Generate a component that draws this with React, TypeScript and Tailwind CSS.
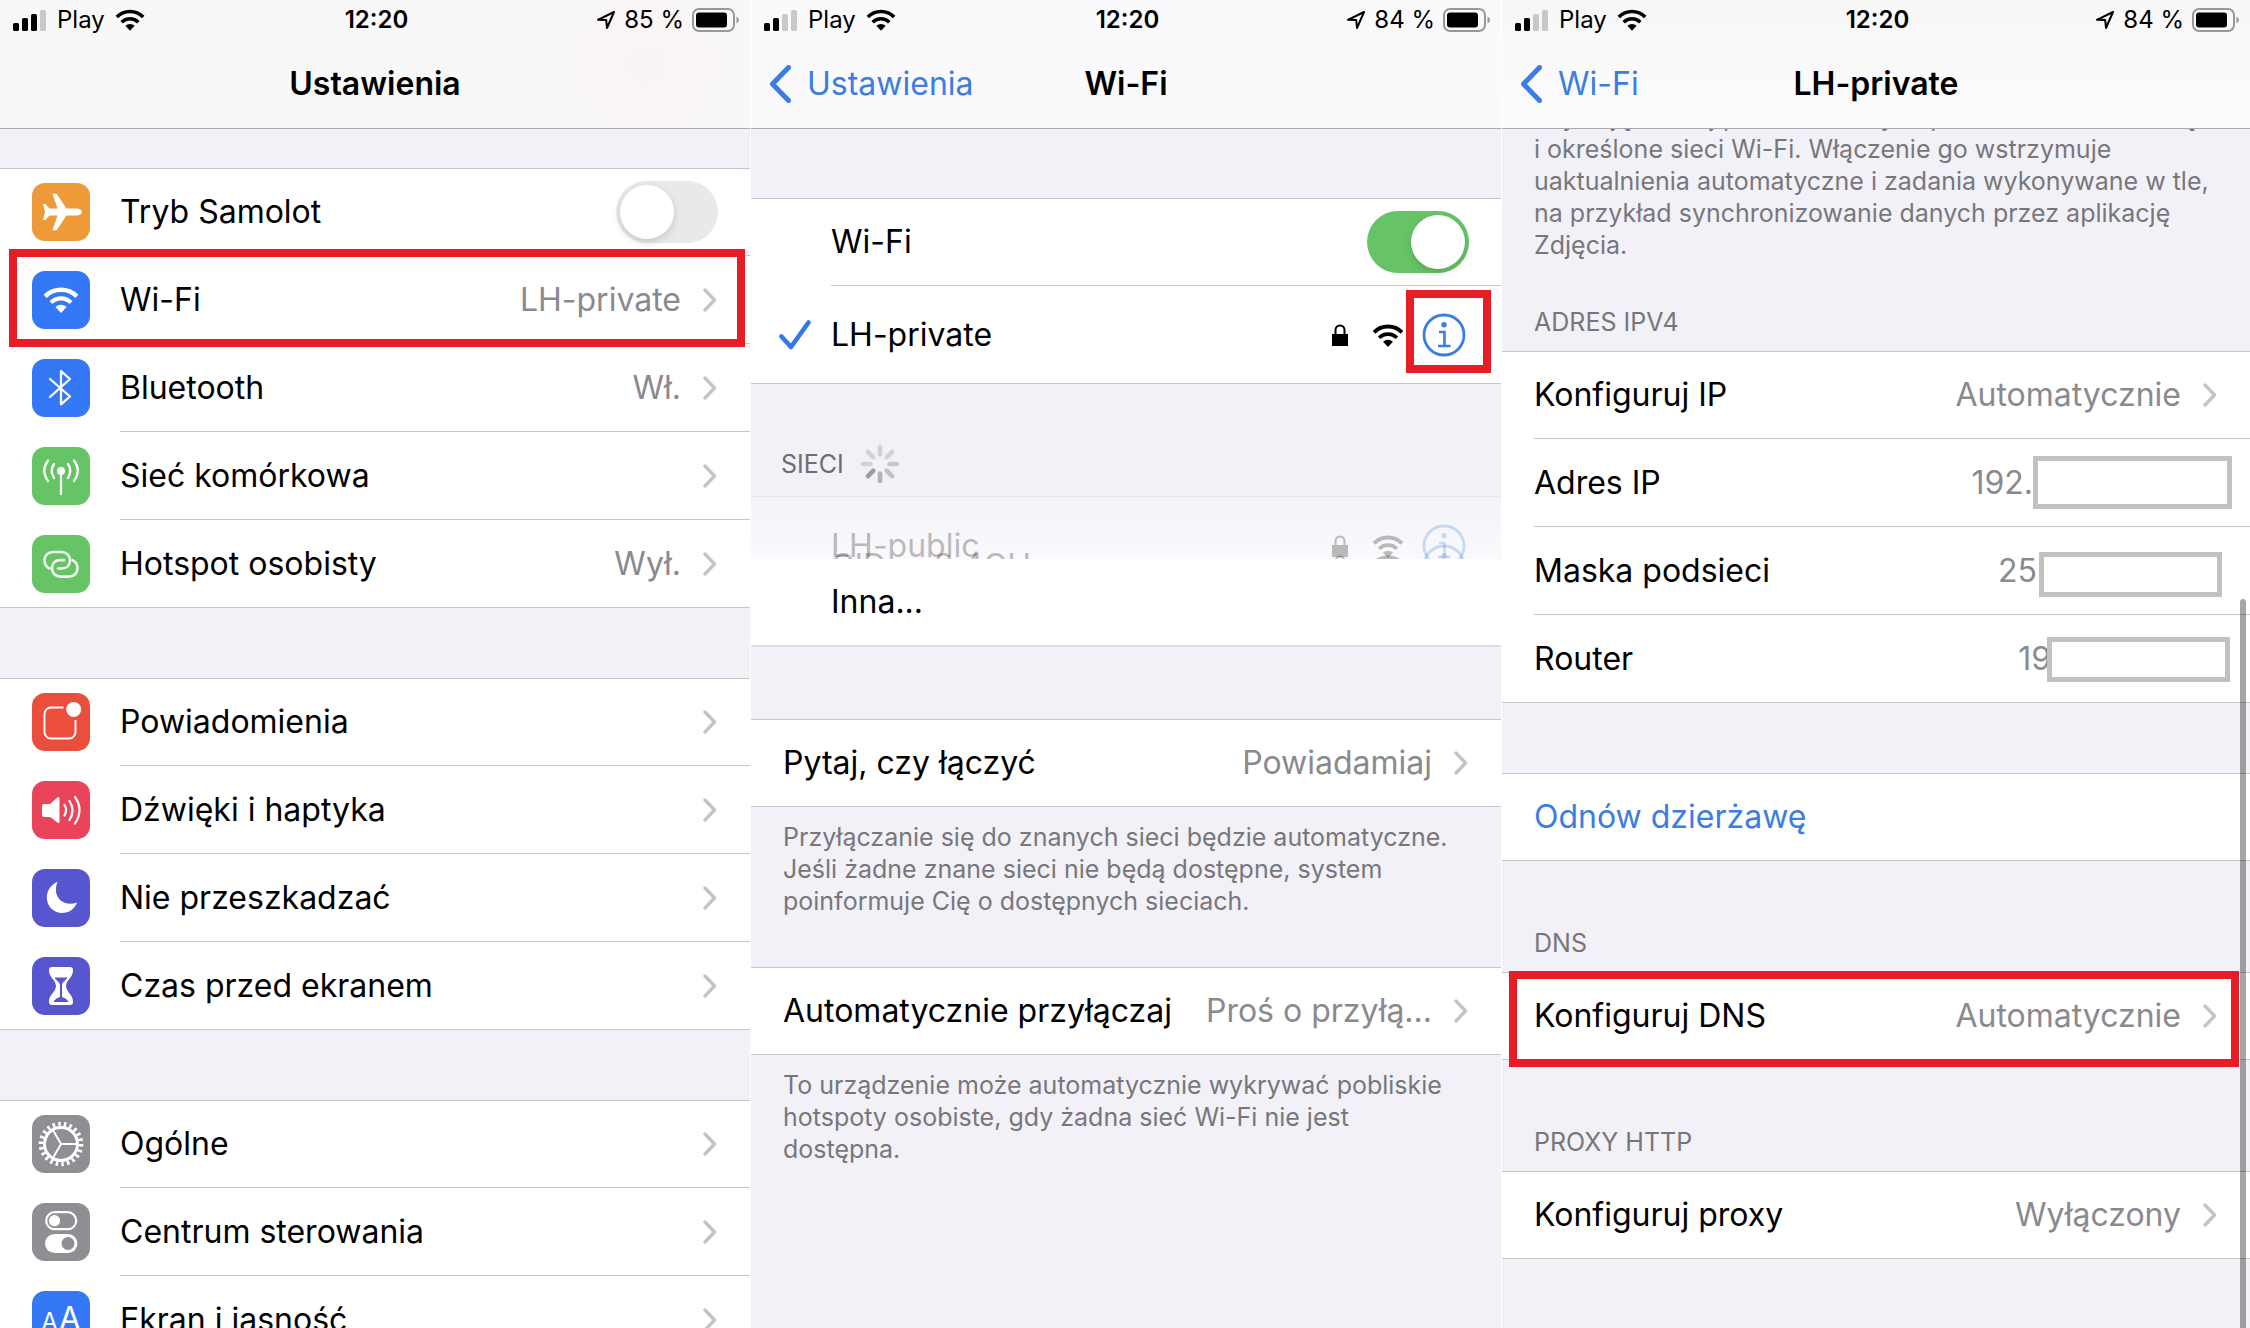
import React from 'react';

type IconProps = { className?: string };

/* ---------- Glyphs ---------- */

const WifiGlyph = ({ className }: IconProps) => (
  <svg viewBox="0 0 36 26" fill="none" className={className} aria-hidden="true">
    <path d="M2.2 9.4a22.2 22.2 0 0 1 31.6 0" stroke="currentColor" strokeWidth="4.4" />
    <path d="M8 15.6a14 14 0 0 1 20 0" stroke="currentColor" strokeWidth="4.2" />
    <path d="M18 26l-5.6-6a8 8 0 0 1 11.2 0z" fill="currentColor" />
  </svg>
);

const ChevronRight = () => (
  <svg viewBox="0 0 14 24" fill="none" className="w-[14px] h-6 shrink-0 text-[#c4c4c7]" aria-hidden="true">
    <path d="M2 2l9.5 10L2 22" stroke="currentColor" strokeWidth="3.4" strokeLinecap="round" strokeLinejoin="round" />
  </svg>
);

const ChevronLeft = () => (
  <svg viewBox="0 0 22 38" fill="none" className="w-[22px] h-[38px]" aria-hidden="true">
    <path d="M19.5 2.5L3.5 19l16 16.5" stroke="currentColor" strokeWidth="5" strokeLinecap="round" strokeLinejoin="round" />
  </svg>
);

const LockGlyph = () => (
  <svg viewBox="0 0 16 22" fill="none" className="w-4 h-[22px]" aria-hidden="true">
    <path d="M3.5 11V6a4.5 4.5 0 0 1 9 0v5" stroke="currentColor" strokeWidth="2" />
    <path d="M0 10h16v12H0z" fill="currentColor" />
  </svg>
);

const InfoGlyph = () => (
  <svg viewBox="0 0 44 44" fill="none" className="block w-11 h-11" aria-hidden="true">
    <circle cx="22" cy="22" r="20" stroke="currentColor" strokeWidth="2.8" />
    <circle cx="22" cy="11.8" r="2.7" fill="currentColor" />
    <path d="M17 19h5.5v14M16 33h12.5" stroke="currentColor" strokeWidth="2.6" />
  </svg>
);

const CheckGlyph = () => (
  <svg viewBox="0 0 32 30" fill="none" className="w-8 h-[30px]" aria-hidden="true">
    <path d="M2.5 16.5L12 27 29.5 2.5" stroke="currentColor" strokeWidth="4.6" strokeLinecap="round" strokeLinejoin="round" />
  </svg>
);

const Spinner = () => (
  <svg viewBox="0 0 40 40" className="w-10 h-10" stroke="#8e8e93" strokeWidth="4.6" strokeLinecap="round" aria-hidden="true">
    {[0.3, 0.3, 0.42, 0.5, 0.62, 0.85, 0.3, 0.3].map((opacity, i) => (
      <path key={i} d="M20 10.5V3" opacity={opacity} transform={`rotate(${i * 45} 20 20)`} />
    ))}
  </svg>
);

/* ---------- App tiles, drawn on a 58px square ---------- */

const Tile = ({ className, children }: { className: string; children: React.ReactNode }) => (
  <svg viewBox="0 0 58 58" fill="none" className={`w-[58px] h-[58px] rounded-[13px] ${className}`} aria-hidden="true">
    {children}
  </svg>
);

const PlaneTile = () => (
  <Tile className="bg-[#ef9a38]">
    <path
      d="M50 29c0-2-3-3.5-6-3.5h-9.5L25.5 12q-.8-1.3-2.3-1.3h-2.7l5 14.8h-8l-4-4.5H11l2 8-2 8h2.5l4-4.5h8l-5 14.8h2.7q1.5 0 2.3-1.3l9-13.5H44c3 0 6-1.5 6-3.5z"
      fill="#fff"
    />
  </Tile>
);

const WifiTile = () => (
  <span className="flex w-[58px] h-[58px] items-center justify-center rounded-[13px] bg-[#3478f6] text-white">
    <WifiGlyph className="w-9 h-[26px]" />
  </span>
);

const BluetoothTile = () => (
  <Tile className="bg-[#3478f6]">
    <path d="M18 20l20 17.5-9 7.8V12.2l9 7.8-20 18" stroke="#fff" strokeWidth="2.3" strokeLinejoin="round" strokeLinecap="round" />
  </Tile>
);

const CellularTile = () => (
  <Tile className="bg-[#67c466]">
    <circle cx="29" cy="24" r="4" fill="#fff" />
    <path
      d="M29 24v23M22 17q-4.5 6.5 0 14M36 17q4.5 6.5 0 14M16 13.5q-7.5 10 0 20.5M42 13.5q7.5 10 0 20.5"
      stroke="#fff"
      strokeWidth="2.3"
      strokeLinecap="round"
    />
  </Tile>
);

const HotspotTile = () => (
  <Tile className="bg-[#67c466]">
    <g stroke="#fff" strokeOpacity="0.9" strokeWidth="2.6" strokeLinecap="round">
      <path d="M17.5 33.5c-3.2-1.6-5-4.6-5-8 0-5 3.5-8.5 8.5-8.5h8.500c5 0 8.500 3.500 8.500 8.500s-3.500 8-8 8h-4" />
      <path
        d="M17.5 33.500c-3.200-1.600-5-4.600-5-8 0-5 3.500-8.500 8.500-8.500h8.500c5 0 8.500 3.500 8.500 8.500s-3.500 8-8 8h-4"
        transform="rotate(180 29 29.300)"
      />
    </g>
  </Tile>
);

const NotificationsTile = () => (
  <Tile className="bg-[#eb4e3d]">
    <path
      d="M31.5 14.500H19a6.500 6.500 0 0 0-6.500 6.500v18a6.500 6.500 0 0 0 6.500 6.500h18a6.500 6.500 0 0 0 6.500-6.500V27"
      stroke="#fff"
      strokeWidth="1.900"
    />
    <circle cx="41.700" cy="16.500" r="7.500" fill="#fff" />
  </Tile>
);

const SoundTile = () => (
  <Tile className="bg-[#ea445a]">
    <path d="M10 25.500q0-2.500 2.500-2.500H18l7.500-6.500q2-1.500 2 1v23q0 2.500-2 1L18 36h-5.500q-2.500 0-2.500-2.500z" fill="#fff" />
    <path
      d="M32.500 24q3.200 5 0 10.500M37.500 20q6 9.500 0 19M43 16q9 13 0 26.500"
      stroke="#fff"
      strokeWidth="2.200"
      strokeLinecap="round"
    />
  </Tile>
);

const MoonTile = () => (
  <Tile className="bg-[#5856ce]">
    <path
      d="M25.500 12.800C18.500 16 14.800 22 14.800 28.500 14.800 37 21.500 44 30 44c7 0 12.500-4 15-10.500-10 4-20-1.500-21-11-.3-3.300.3-6.500 1.500-9.700z"
      fill="#fff"
    />
  </Tile>
);

const HourglassTile = () => (
  <Tile className="bg-[#5856ce]">
    <path
      d="M20 10h18q3 0 3 3c0 8-6.500 9-7 16 .5 7 7 8 7 16q0 3-3 3H20q-3 0-3-3c0-8 6.500-9 7-16-.5-7-7-8-7-16q0-3 3-3z"
      fill="#fff"
    />
    <path
      d="M22.500 20.500h13c-2 3.500-5.500 4.500-5.500 8V40c2 1 5 1.500 6.500 5h-15c1.500-3.500 4.500-4 6.500-5V28.500c0-3.500-3.500-4.500-5.500-8z"
      fill="#5856ce"
    />
  </Tile>
);

const GearTile = () => (
  <Tile className="bg-[#8e8e93]">
    <g stroke="#fff">
      <circle cx="29" cy="29" r="16.500" strokeWidth="3" />
      <circle cx="29" cy="29" r="20" strokeWidth="4.600" pathLength="44" strokeDasharray="0.900 1.100" />
      <path d="M29 29h15.500M29 29l-7.800-13.400M29 29l-7.800 13.400" strokeWidth="2" />
    </g>
  </Tile>
);

const ControlCenterTile = () => (
  <Tile className="bg-[#8e8e93]">
    <rect x="14.200" y="9.200" width="30" height="17" rx="8.500" stroke="#fff" strokeWidth="2.200" />
    <circle cx="22.500" cy="17.700" r="5.600" fill="#fff" />
    <rect x="13" y="31" width="32.400" height="19" rx="9.500" fill="#fff" />
    <circle cx="36" cy="40.500" r="6.500" fill="#8e8e93" />
  </Tile>
);

const DisplayTile = () => (
  <span className="flex w-[58px] h-[58px] items-baseline justify-center gap-px rounded-[13px] bg-[#3478f6] pt-2 text-white">
    <span className="text-2xl">A</span>
    <span className="text-[32px] leading-10">A</span>
  </span>
);

/* ---------- Shared parts ---------- */

const Highlight = ({ className }: { className: string }) => (
  <span className={`pointer-events-none absolute z-10 border-8 border-[#e81c24] ${className}`} />
);

const StatusBar = ({ bars, battery }: { bars: number; battery: string }) => (
  <div className="grid h-10 grid-cols-3 items-center pl-[13px] pr-[10px] text-2xl text-black">
    <div className="flex items-center gap-[10px]">
      <svg viewBox="0 0 34 22" className="w-[34px] h-[22px]" aria-hidden="true">
        {[8, 13, 17, 21].map((h, i) => (
          <rect key={h} x={i * 9} y={22 - h} width="6" height={h} rx="1.5" fill={i < bars ? '#000' : '#c8c8c9'} />
        ))}
      </svg>
      <span>Play</span>
      <WifiGlyph className="w-[30px] h-[22px]" />
    </div>
    <span className="text-center font-semibold">12:20</span>
    <div className="flex items-center justify-end gap-2 whitespace-nowrap">
      <svg viewBox="0 0 20 20" fill="none" className="w-5 h-5" aria-hidden="true">
        <path d="M18 2L2 9.800l8.200.2.800 8z" stroke="currentColor" strokeWidth="2" strokeLinejoin="round" />
      </svg>
      <span>{battery}</span>
      <svg viewBox="0 0 48 24" fill="none" className="w-12 h-6" aria-hidden="true">
        <rect x="1" y="1" width="41" height="22" rx="6" stroke="#98989b" strokeWidth="2" />
        <rect x="4" y="4.500" width="31" height="15" rx="3" fill="#000" />
        <path d="M44.500 8.500q2.500 1 2.500 3.500t-2.500 3.500z" fill="#98989b" />
      </svg>
    </div>
  </div>
);

type ScreenProps = {
  title: string;
  back?: string;
  bars: number;
  battery: string;
  headerClass: string;
  children: React.ReactNode;
};

const Screen = ({ title, back, bars, battery, headerClass, children }: ScreenProps) => (
  <section className="relative flex min-w-0 flex-col overflow-hidden bg-[#f2f1f7]">
    <header className={`relative shrink-0 border-b border-[#a8a8ae] ${headerClass}`}>
      <StatusBar bars={bars} battery={battery} />
      <div className="grid h-22 grid-cols-[1fr_auto_1fr] items-center px-[18px]">
        {back ? (
          <a href="#" className="flex items-center gap-4 text-[#3b7de0]">
            <ChevronLeft />
            {back}
          </a>
        ) : (
          <span />
        )}
        <h1 className="font-semibold">{title}</h1>
      </div>
    </header>
    <div className="min-h-0 flex-1 overflow-hidden">{children}</div>
  </section>
);

const Group = ({ children }: { children: React.ReactNode }) => (
  <div className="bg-white shadow-[inset_0_1px_0_#c6c6c8,inset_0_-1px_0_#c6c6c8]">{children}</div>
);

type RowProps = {
  label: string;
  value?: string;
  icon?: React.ReactNode;
  last?: boolean;
  children?: React.ReactNode;
};

const Row = ({ label, value, icon, last, children }: RowProps) => (
  <a href="#" className="relative flex h-22 items-center gap-[30px] pl-8">
    {icon}
    <span
      className={`flex h-full min-w-0 flex-1 items-center justify-between pr-[33px] ${last ? '' : 'border-b border-[#c6c6c8]'}`}
    >
      <span className="whitespace-nowrap">{label}</span>
      <span className="flex items-center gap-[22px] whitespace-nowrap text-[#8a8a8e]">
        {value}
        <ChevronRight />
      </span>
    </span>
    {children}
  </a>
);

const Toggle = ({ id, on }: { id: string; on?: boolean }) => (
  <input
    id={id}
    type="checkbox"
    role="switch"
    defaultChecked={on}
    className="h-[62px] w-[102px] appearance-none rounded-full bg-[#e9e9eb] p-1 before:block before:h-[54px] before:w-[54px] before:rounded-full before:bg-white before:shadow-[0_3px_8px_rgba(0,0,0,0.15)] before:content-[''] checked:bg-[#67c466] checked:before:ml-10"
  />
);

const Note = ({ className, children }: { className: string; children: React.ReactNode }) => (
  <p className={`whitespace-nowrap px-8 text-[25px] leading-8 text-[#77777b] ${className}`}>{children}</p>
);

const GroupLabel = ({ className, children }: { className: string; children: React.ReactNode }) => (
  <h2 className={`flex items-end px-8 pb-[13px] text-[25px] leading-8 text-[#77777b] ${className}`}>{children}</h2>
);

const NetworkRow = ({ name, checked, highlight }: { name: string; checked?: boolean; highlight?: boolean }) => (
  <div className="flex h-[98px] items-center pr-[35px]">
    <span className="w-20 shrink-0 pl-7 text-[#3478e6]">{checked && <CheckGlyph />}</span>
    <span className="flex-1">{name}</span>
    <LockGlyph />
    <WifiGlyph className="ml-6 h-[23px] w-8" />
    <button type="button" aria-label={`Informacje o sieci ${name}`} className="relative ml-[18px] text-[#3b7de0]">
      <InfoGlyph />
      {highlight && <Highlight className="-top-[23px] -right-[25px] -bottom-4 -left-4" />}
    </button>
  </div>
);

// Address rows end with an empty box that hides the rest of the number
const MaskedRow = ({ label, value, box, last }: { label: string; value: string; box: string; last?: boolean }) => (
  <div className="flex h-22 pl-8">
    <div className={`flex flex-1 items-center justify-between ${last ? '' : 'border-b border-[#c6c6c8]'}`}>
      <span>{label}</span>
      <span className="flex items-center text-[#8a8a8e]">
        {value}
        <span className={`border-[5px] border-[#c1c1c2] bg-white ${box}`} />
      </span>
    </div>
  </div>
);

/* ---------- Screens ---------- */

const SettingsScreen = () => (
  <Screen
    title="Ustawienia"
    bars={3}
    battery="85 %"
    headerClass="bg-[#f8f8f9] bg-[radial-gradient(circle_at_86%_50%,#fbf3f3_0,#f8f8f9_110px)]"
  >
    <div className="flex flex-col gap-[70px] pt-[39px]">
      <Group>
        <div className="flex h-22 items-center gap-[30px] pl-8">
          <PlaneTile />
          <div className="flex h-full flex-1 items-center justify-between border-b border-[#c6c6c8] pr-8">
            <label htmlFor="airplane">Tryb Samolot</label>
            <Toggle id="airplane" />
          </div>
        </div>
        <Row icon={<WifiTile />} label="Wi-Fi" value="LH-private">
          <Highlight className="-top-[7px] right-[5px] -bottom-[3px] left-[9px]" />
        </Row>
        <Row icon={<BluetoothTile />} label="Bluetooth" value="Wł." />
        <Row icon={<CellularTile />} label="Sieć komórkowa" />
        <Row icon={<HotspotTile />} label="Hotspot osobisty" value="Wył." last />
      </Group>
      <Group>
        <Row icon={<NotificationsTile />} label="Powiadomienia" />
        <Row icon={<SoundTile />} label="Dźwięki i haptyka" />
        <Row icon={<MoonTile />} label="Nie przeszkadzać" />
        <Row icon={<HourglassTile />} label="Czas przed ekranem" last />
      </Group>
      <Group>
        <Row icon={<GearTile />} label="Ogólne" />
        <Row icon={<ControlCenterTile />} label="Centrum sterowania" />
        <Row icon={<DisplayTile />} label="Ekran i jasność" />
      </Group>
    </div>
  </Screen>
);

const WifiScreen = () => (
  <Screen title="Wi-Fi" back="Ustawienia" bars={2} battery="84 %" headerClass="bg-[#fafafc]">
    <div className="pt-[69px]">
      <Group>
        <div className="flex h-22 pl-20">
          <div className="flex flex-1 items-center justify-between border-b border-[#c6c6c8] pr-8">
            <label htmlFor="wifi">Wi-Fi</label>
            <Toggle id="wifi" on />
          </div>
        </div>
        <NetworkRow name="LH-private" checked highlight />
      </Group>

      <div className="flex h-28 items-end gap-4 pb-3 pl-[30px]">
        <h2 className="text-[25px] leading-10 text-[#6d6d72]">SIECI</h2>
        <Spinner />
      </div>

      {/* Network list fading in, with the next row still sliding out from under the first */}
      <div className="relative h-[63px] overflow-hidden border-t border-[#e6e6ea] bg-linear-to-b from-[#f3f2f7] to-[#fafafd]">
        <div className="opacity-25">
          <NetworkRow name="LH-public" />
        </div>
        <div className="absolute inset-x-0 top-5 opacity-25">
          <NetworkRow name="CID_n_2.4GH" />
        </div>
      </div>
      <div className="flex h-22 items-center border-b-2 border-[#dfdfe3] bg-white pl-20">
        <button type="button">Inna...</button>
      </div>

      <div className="pt-[72px]">
        <Group>
          <Row label="Pytaj, czy łączyć" value="Powiadamiaj" last />
        </Group>
      </div>
      <Note className="pt-[14px] pb-[50px]">
        Przyłączanie się do znanych sieci będzie automatyczne.
        <br />
        Jeśli żadne znane sieci nie będą dostępne, system
        <br />
        poinformuje Cię o dostępnych sieciach.
      </Note>
      <Group>
        <Row label="Automatycznie przyłączaj" value="Proś o przyłą..." last />
      </Group>
      <Note className="pt-[14px]">
        To urządzenie może automatycznie wykrywać pobliskie
        <br />
        hotspoty osobiste, gdy żadna sieć Wi-Fi nie jest
        <br />
        dostępna.
      </Note>
    </div>
  </Screen>
);

const NetworkScreen = () => (
  <Screen
    title="LH-private"
    back="Wi-Fi"
    bars={2}
    battery="84 %"
    headerClass="bg-linear-to-b from-[#f7f7f7] to-[#fcfcfe]"
  >
    <Note className="-mt-7">
      używając mniej pakietów danych przez sieć komórkową
      <br />
      i określone sieci Wi-Fi. Włączenie go wstrzymuje
      <br />
      uaktualnienia automatyczne i zadania wykonywane w tle,
      <br />
      na przykład synchronizowanie danych przez aplikację
      <br />
      Zdjęcia.
    </Note>

    <GroupLabel className="h-[90px]">ADRES IPV4</GroupLabel>
    <Group>
      <Row label="Konfiguruj IP" value="Automatycznie" />
      <MaskedRow label="Adres IP" value="192." box="mr-[18px] h-[53px] w-[199px]" />
      <MaskedRow label="Maska podsieci" value="25" box="mt-2 mr-7 ml-[2px] h-[45px] w-[183px]" />
      <MaskedRow label="Router" value="19" box="mr-5 -ml-1 h-[45px] w-[183px]" last />
    </Group>

    <div className="pt-[70px]">
      <Group>
        <div className="flex h-22 items-center pl-8">
          <button type="button" className="text-[#3b7de0]">
            Odnów dzierżawę
          </button>
        </div>
      </Group>
    </div>

    <GroupLabel className="h-[111px]">DNS</GroupLabel>
    <Group>
      <Row label="Konfiguruj DNS" value="Automatycznie" last>
        <Highlight className="-top-px right-[11px] -bottom-[7px] left-[7px]" />
      </Row>
    </Group>

    <GroupLabel className="h-[111px]">PROXY HTTP</GroupLabel>
    <Group>
      <Row label="Konfiguruj proxy" value="Wyłączony" last />
    </Group>

    {/* Scroll indicator */}
    <div className="absolute top-[599px] right-1 bottom-0 w-[6px] rounded-t-full bg-black/35" />
  </Screen>
);

export default function App() {
  return (
    <main className="grid h-screen grid-cols-[750fr_750fr_748fr] gap-px overflow-hidden bg-white font-['Inter',sans-serif] text-[32px] leading-10 text-black">
      <SettingsScreen />
      <WifiScreen />
      <NetworkScreen />
    </main>
  );
}
